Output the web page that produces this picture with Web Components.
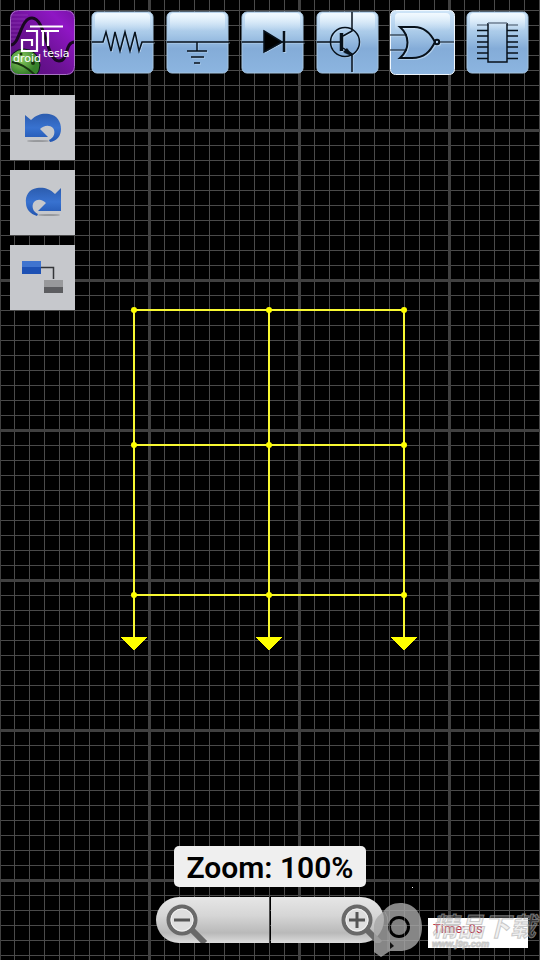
<!DOCTYPE html>
<html lang="en">
<head>
<meta charset="utf-8">
<meta name="viewport" content="width=device-width, initial-scale=1">
<title>DroidTesla</title>
<style>
body {
  margin: 0;
  background: #000;
  font-family: Roboto, "Liberation Sans", "Noto Sans CJK SC", sans-serif;
}
</style>
</head>
<body>

<circuit-app>
  <wire-canvas slot="canvas"></wire-canvas>
  <tool-bar slot="tools">
    <part-button kind="logo" label="Menu"></part-button>
    <part-button kind="resistor" label="Resistor"></part-button>
    <part-button kind="ground" label="Ground"></part-button>
    <part-button kind="diode" label="Diode"></part-button>
    <part-button kind="transistor" label="Transistor"></part-button>
    <part-button kind="gate" label="Logic gate" active></part-button>
    <part-button kind="chip" label="Integrated circuit"></part-button>
  </tool-bar>
  <side-bar slot="side">
    <edit-button kind="undo" label="Undo"></edit-button>
    <edit-button kind="redo" label="Redo"></edit-button>
    <edit-button kind="connect" label="Connect"></edit-button>
  </side-bar>
  <zoom-control slot="zoom">Zoom: 100%</zoom-control>
  <sim-clock slot="clock">Time: 0s</sim-clock>
  <site-mark slot="mark">精品下载<span slot="site">www.j9p.com</span></site-mark>
</circuit-app>

<script>
function define(name, html) {
    customElements.define(name, class extends HTMLElement {
        constructor() {
            super()
            this.attachShadow({mode: 'open'})
        }

        connectedCallback() {
            this.shadowRoot.innerHTML = typeof html === 'function' ? html(this) : html
        }
    })
}

let logo = `
<defs>
  <linearGradient id="g" x1="0" y1="1" x2="1" y2="0">
    <stop offset="0" stop-color="#4f0c72"/><stop offset=".45" stop-color="#6c1295"/><stop offset=".8" stop-color="#8f16c4"/><stop offset="1" stop-color="#7712a6"/>
  </linearGradient>
  <radialGradient id="b" cx=".4" cy=".3"><stop offset="0" stop-color="#8fcf62"/><stop offset="1" stop-color="#35802a"/></radialGradient>
  <clipPath id="c"><rect width="65" height="65" rx="8"/></clipPath>
</defs>
<g clip-path="url(#c)">
  <rect width="65" height="65" fill="url(#g)"/>
  <path d="M0 5h18M0 9h15M0 13h13M0 17h11M0 21h10M0 25h9M0 29h8" stroke="#a64fc8" opacity=".45"/>
  <circle cx="14" cy="55" r="16" fill="url(#b)"/>
  <path d="M2 52Q14 54 25 65" stroke="#17330f" stroke-width="2"/>
  <circle cx="11" cy="44" r="1.5" fill="#17330f" stroke="none"/><circle cx="23" cy="53" r="2" fill="#17330f" stroke="none"/>
  <path d="M0 35C10 36 10 8 22 8C36 8 36 51 49 51C59 51 54 32 65 32" stroke="#180820" stroke-width="3"/>
  <path d="M20 16.5H53M16 21H27V41H12V30H22V36M31 21H49M33 21V36M38 21V36" stroke="#fff" stroke-width="2.2"/>
  <rect width="64" height="64" x=".5" y=".5" rx="8" stroke="#a873c4"/>
</g>
<g fill="#fff" stroke="none" font-family="DejaVu Sans, sans-serif" font-size="11">
  <text x="3" y="52">droid</text>
  <text x="33" y="47">tesla</text>
</g>`

let parts = {
    resistor: `<path d="M2 32H13L16 22L21 41L25 22L30 41L35 22L40 41L45 22L49 41L52 32H64"/>`,
    ground: `<path d="M2 32H64M32 32V41M22 41H42M26 47H39M29 53H35"/>`,
    diode: `<path d="M2 32H65"/><path d="M24 21L42 32L24 42Z" fill="#000"/><path d="M44 21V42" stroke-width="2.5"/>`,
    transistor: `<circle cx="30" cy="32" r="14.5"/>
<path d="M2 32H27M37 2V21L28 26M28 38L37 44V62"/>
<path d="M26.5 23V41" stroke-width="3.5"/><path d="M37 46L28 42L32 38Z" fill="#07111b" stroke="none"/>`,
    gate: `<path d="M0 25H17M0 40H17M50 32H64" stroke-width="1.2"/>
<path d="M10 17C20 26 20 39 10 48H22C34 48 40 42 45 32C40 22 33 16 22 17Z" stroke-width="2"/>
<circle cx="47" cy="32" r="2.2" stroke-width="2"/>`,
    chip: `<path d="M12 15H23M42 15H53" stroke="#6b7d90"/>
<path d="M12 20.5H23M12 26H23M12 32H23M12 37H23M12 43H23M12 48.5H23M42 20.5H53M42 26H53M42 32H53M42 37H53M42 43H53M42 48.5H53"/>
<path d="M23 13V52H42V13"/><path d="M23 13H42" stroke="#6b7d90"/>`
}

function tile(kind, active) {
    let box = active ? 'x=".5" y=".5" width="64" height="64" rx="5"' : 'x="2" y="2" width="61" height="61" rx="5"'
    return `
<defs>
  <linearGradient id="t" x2="0" y2="1">
    <stop offset="0" stop-color="#cfe5f8"/><stop offset=".35" stop-color="#a8c9e8"/><stop offset=".6" stop-color="#84acd8"/><stop offset="1" stop-color="#8cb5e0"/>
  </linearGradient>
  <linearGradient id="s" x2="0" y2="1">
    <stop offset="0" stop-color="#f2faff"/><stop offset="1" stop-color="#f2faff" stop-opacity="0"/>
  </linearGradient>
</defs>
<rect ${box} fill="url(#t)" stroke="${active ? '#f0f7fd' : '#a5c4e0'}"/>
<rect x="5" y="3" width="55" height="18" rx="4" fill="url(#s)" stroke="none"/>
<g transform="translate(1 1)" stroke="#d9ecfb" opacity=".5">${kind === 'chip' ? '' : parts[kind]}</g>
<g stroke-width="1.5">${parts[kind]}</g>`
}

let edits = {
    undo: `<ellipse cx="28" cy="46" rx="11" ry="1" fill="#97999c"/>
<path d="M15 20L21 25C27 19 33 18 39 19C47 20 51 27 51 34C51 41 47 46 40 47L39 45C44 43 46 37 43 33C39 29 33 31 30 34L38 42H15Z" fill="url(#blue)"/>`,
    redo: `<ellipse cx="39" cy="45" rx="11" ry="1" fill="#97999c"/>
<path d="M51 18L45 24C39 18 33 17 27 18C19 19 15 26 16 33C16 39 20 44 27 46L28 44C23 42 21 36 24 32C28 28 33 30 36 33L28 41H51Z" fill="url(#blue)"/>`,
    connect: `<path d="M31 22.5H43.5V34" fill="none" stroke="#343639" stroke-width="1.5"/>
<rect x="12" y="16" width="19" height="7" fill="#3f74cf"/><rect x="12" y="22" width="19" height="7" fill="#1d51b4"/>
<rect x="34" y="35" width="19" height="7" fill="#98999b"/><rect x="34" y="42" width="19" height="6" fill="#5c5d60"/>`
}

// 15px grid with a heavier line every 150px
define('circuit-app', `
<style>
:host {
  display: flex;
  flex-direction: column;
  gap: 20px;
  position: relative;
  box-sizing: border-box;
  min-height: 100vh;
  padding: 10px 10px 17px;
  overflow: hidden;
  background:
    linear-gradient(90deg, #404040 3px, transparent 3px) 148px 129px / 150px 150px,
    linear-gradient(#404040 3px, transparent 3px) 148px 129px / 150px 150px,
    linear-gradient(90deg, #4a4a4a 1px, transparent 1px) 14px 10px / 15px 15px,
    linear-gradient(#4a4a4a 1px, transparent 1px) 14px 10px / 15px 15px,
    #000;
}
.zoom { margin-top: auto; }
</style>
<slot name="canvas"></slot>
<slot name="tools"></slot>
<slot name="side"></slot>
<div class="zoom"><slot name="zoom"></slot></div>
<slot name="clock"></slot>
<slot name="mark"></slot>`)

define('wire-canvas', () => {
    let xs = [134, 269, 404]
    let ys = [310, 445, 595]
    let rows = ys.map(y => `<path d="M${xs[0]} ${y}H${xs[2]}"/>`).join('')
    let cols = xs.map(x => `<path d="M${x} ${ys[0]}V638"/>`).join('')
    let dots = xs.map(x => ys.map(y => `<circle cx="${x}" cy="${y}" r="3"/>`).join('')).join('')
    let ends = xs.map(x => `<path d="M${x - 13} 637H${x + 13}L${x} 651Z" shape-rendering="crispEdges"/>`).join('')
    return `
<style>
:host { display: block; position: absolute; inset: 0; pointer-events: none; }
svg { display: block; width: 100%; height: 100%; }
</style>
<svg aria-hidden="true">
  <g stroke="#f8f832" stroke-width="2">${rows}${cols}</g>
  <g fill="#ff0">${dots}${ends}</g>
  <rect x="412" y="887" width="1" height="1" fill="#fff"/>
</svg>`
})

define('tool-bar', `
<style>
:host { display: flex; gap: 10px; position: relative; }
::slotted([kind="logo"]) { margin-right: 5px; }
</style>
<slot></slot>`)

define('side-bar', `
<style>
:host { display: flex; flex-direction: column; align-items: flex-start; gap: 10px; position: relative; }
</style>
<slot></slot>`)

define('part-button', el => {
    let kind = el.getAttribute('kind')
    return `
<style>
:host { display: block; }
button { display: block; padding: 0; border: 0; background: none; }
svg { display: block; }
</style>
<button type="button" aria-label="${el.getAttribute('label')}">
  <svg width="65" height="65" viewBox="0 0 65 65" fill="none" stroke="#07111b">${kind === 'logo' ? logo : tile(kind, el.hasAttribute('active'))}</svg>
</button>`
})

define('edit-button', el => `
<style>
:host { display: block; }
button { display: block; padding: 0; border: 0; background: #c6c8cc; }
svg { display: block; }
</style>
<button type="button" aria-label="${el.getAttribute('label')}">
  <svg width="65" height="65" viewBox="0 0 65 65">
    <defs><linearGradient id="blue" x2="0" y2="1"><stop offset="0" stop-color="#2c5cae"/><stop offset=".5" stop-color="#3872d0"/><stop offset="1" stop-color="#2255b0"/></linearGradient></defs>
    ${edits[el.getAttribute('kind')]}
  </svg>
</button>`)

let lens = sign => `
<svg width="53" height="46" viewBox="0 0 53 46" fill="none">
  <path d="M35 32L49 46" stroke="#696969" stroke-width="6"/>
  <circle cx="26" cy="23" r="13.5" fill="#dedede" stroke="#696969" stroke-width="4"/>
  <circle cx="26" cy="23" r="11" stroke="#f2f2f2"/>
  <path d="${sign}" stroke="#555" stroke-width="3"/>
</svg>`

define('zoom-control', `
<style>
:host { display: flex; flex-direction: column; align-items: center; gap: 10px; position: relative; }
output {
  padding: 5px 12px 3px;
  border-radius: 5px;
  background: #efefef;
  color: #000;
  font-size: 30px;
  font-weight: 600;
  line-height: 33px;
}
.bar { display: flex; gap: 2px; }
button {
  display: flex;
  width: 113px;
  padding: 0;
  border: 0;
  border-radius: 23px 0 0 23px;
  background: linear-gradient(#e6e6e6, #d6d6d6 40%, #b9b9b9 78%, #dcdcdc);
}
button:last-child { justify-content: flex-end; border-radius: 0 23px 23px 0; }
</style>
<output><slot></slot></output>
<div class="bar">
  <button type="button" aria-label="Zoom out">${lens('M18 23H34')}</button>
  <button type="button" aria-label="Zoom in">${lens('M18 23H34M26 15V31')}</button>
</div>`)

define('sim-clock', `
<style>
:host {
  display: block;
  position: absolute;
  right: 12px;
  bottom: 12px;
  box-sizing: border-box;
  width: 100px;
  height: 30px;
  padding: 3px 5px;
  background: #fff;
  color: #bd3448;
  font: 13px/16px Roboto, "Liberation Sans", sans-serif;
  letter-spacing: normal;
}
</style>
<slot></slot>`)

define('site-mark', `
<style>
:host {
  display: flex;
  align-items: center;
  gap: 9px;
  position: absolute;
  right: 4px;
  bottom: 3px;
  pointer-events: none;
  font-family: "Noto Sans CJK SC", sans-serif;
  font-weight: 700;
  font-style: italic;
  white-space: nowrap;
  color: rgba(205, 205, 205, .3);
  -webkit-text-stroke: 1px rgba(170, 170, 170, .6);
}
.name { font-size: 26px; line-height: 28px; }
.site { font: italic 700 9px/10px "Liberation Sans", sans-serif; }
</style>
<svg width="49" height="54" viewBox="0 0 49 54">
  <path fill="#a8a8a8" fill-opacity=".8" fill-rule="evenodd" d="M0 46V22C1 16 4 13 9 9C13 3 19 0 26 0C40 0 48 10 48 24C48 39 39 48 26 48H16L7 54L0 49ZM25 13A11 11 0 1 0 25 35A11 11 0 1 0 25 13Z"/>
  <circle cx="25" cy="24" r="8" fill="#a0a0a0" fill-opacity=".8"/>
  <path d="M16 39L20 43L16 46Z" fill="#111"/>
  <path d="M11 9Q14 13 14 20V48" fill="none" stroke="#bbb" stroke-opacity=".4"/>
</svg>
<div>
  <div class="name"><slot></slot></div>
  <div class="site"><slot name="site"></slot></div>
</div>`)
</script>
</body>
</html>
